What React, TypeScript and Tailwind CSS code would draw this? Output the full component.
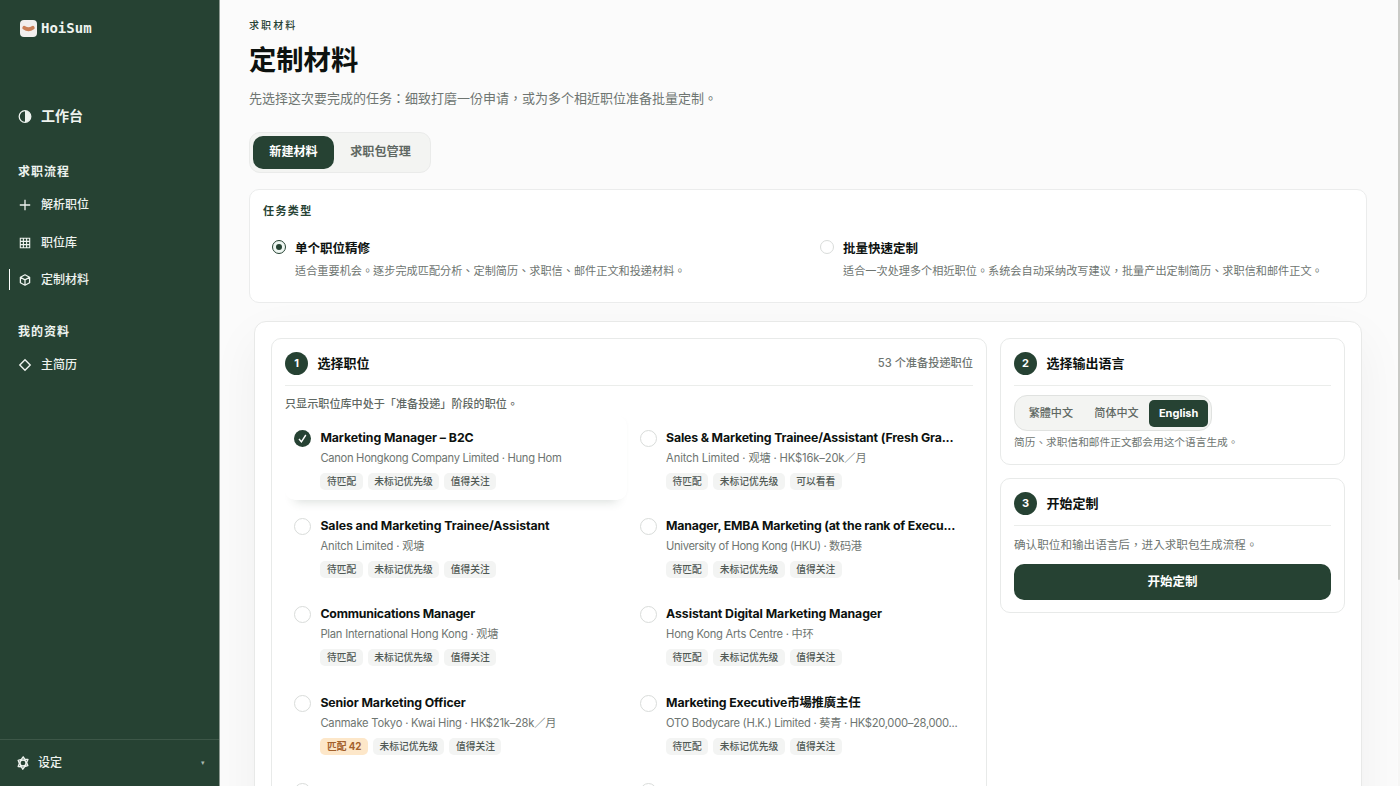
import { useState } from "react";
import type { ReactNode } from "react";

interface Job {
  title: string;
  meta: string;
  tags: string[];
  match?: string;
  titleClass?: string;
  metaClass?: string;
}

const JOBS: Job[] = [
  {
    title: "Marketing Manager – B2C",
    meta: "Canon Hongkong Company Limited · Hung Hom",
    tags: ["待匹配", "未标记优先级", "值得关注"],
    titleClass: "tracking-[-0.06px]",
    metaClass: "tracking-[-0.3px]",
  },
  {
    title: "Sales & Marketing Trainee/Assistant (Fresh Gra...",
    meta: "Anitch Limited · 观塘 · HK$16k–20k／月",
    tags: ["待匹配", "未标记优先级", "可以看看"],
    titleClass: "tracking-[-0.16px]",
    metaClass: "tracking-[-0.14px]",
  },
  {
    title: "Sales and Marketing Trainee/Assistant",
    meta: "Anitch Limited · 观塘",
    tags: ["待匹配", "未标记优先级", "值得关注"],
    titleClass: "tracking-[-0.07px]",
    metaClass: "tracking-[-0.17px]",
  },
  {
    title: "Manager, EMBA Marketing (at the rank of Execu...",
    meta: "University of Hong Kong (HKU) · 数码港",
    tags: ["待匹配", "未标记优先级", "值得关注"],
    titleClass: "tracking-[-0.19px]",
    metaClass: "tracking-[-0.35px]",
  },
  {
    title: "Communications Manager",
    meta: "Plan International Hong Kong · 观塘",
    tags: ["待匹配", "未标记优先级", "值得关注"],
    titleClass: "tracking-[-0.18px]",
    metaClass: "tracking-[-0.23px]",
  },
  {
    title: "Assistant Digital Marketing Manager",
    meta: "Hong Kong Arts Centre · 中环",
    tags: ["待匹配", "未标记优先级", "值得关注"],
    titleClass: "tracking-[-0.08px]",
    metaClass: "tracking-[-0.26px]",
  },
  {
    title: "Senior Marketing Officer",
    meta: "Canmake Tokyo · Kwai Hing · HK$21k–28k／月",
    match: "匹配 42",
    tags: ["未标记优先级", "值得关注"],
    titleClass: "tracking-[-0.1px]",
    metaClass: "tracking-[-0.22px]",
  },
  {
    title: "Marketing Executive市場推廣主任",
    meta: "OTO Bodycare (H.K.) Limited · 葵青 · HK$20,000–28,000...",
    tags: ["待匹配", "未标记优先级", "值得关注"],
    titleClass: "tracking-[-0.1px]",
    metaClass: "tracking-[-0.29px]",
  },
  { title: "", meta: "", tags: [] },
  { title: "", meta: "", tags: [] },
];

const LANGUAGES = ["繁體中文", "简体中文", "English"];

function Logo() {
  return (
    <svg width="17" height="17" viewBox="0 0 17 17">
      <rect width="17" height="17" rx="4" fill="#f3efee" />
      <path d="M4.2 7.8 Q8.5 10.8 12.8 7.8" fill="none" stroke="#cb7f57" strokeWidth="3.8" strokeLinecap="round" />
    </svg>
  );
}

function NavIcon({ children }: { children: ReactNode }) {
  return (
    <svg width="14" height="14" viewBox="0 0 14 14" fill="none" stroke="currentColor" strokeWidth="1.3" className="shrink-0">
      {children}
    </svg>
  );
}

function NavItem({ label, icon, active }: { label: string; icon: ReactNode; active?: boolean }) {
  return (
    <a className="relative flex h-[37.7px] items-center gap-[9px] pl-[18px] text-[12px] font-medium text-[#eef3ef]">
      {active && <span className="absolute left-[8.5px] top-[8px] h-[21px] w-[1.5px] bg-white" />}
      <NavIcon>{icon}</NavIcon>
      {label}
    </a>
  );
}

function Sidebar() {
  return (
    <aside className="flex h-full w-[220px] shrink-0 flex-col border-r border-[#8d9a92] bg-[#264233] text-[#eef3ef]">
      <div className="flex h-[56px] items-center gap-[4px] pl-[20px]">
        <Logo />
        <span className="font-['DejaVu_Sans_Mono',monospace] text-[14px] font-bold">HoiSum</span>
      </div>

      <nav className="mt-[41px] flex flex-col">
        <a className="flex h-[38px] items-center gap-[9px] pl-[18px] text-[14px] font-bold">
          <NavIcon>
            <circle cx="7" cy="7.5" r="5.8" />
            <path d="M7 1.7 A5.8 5.8 0 0 1 7 13.3 Z" fill="currentColor" stroke="none" />
          </NavIcon>
          <span className="-mt-px">工作台</span>
        </a>

        <div className="mt-[28px] flex h-[18px] items-center pl-[18px] text-[12px] font-bold tracking-[1px]">求职流程</div>
        <div className="mt-[5px]">
          <NavItem label="解析职位" icon={<path d="M7 1.8 V12.2 M1.8 7 H12.2" />} />
          <NavItem
            label="职位库"
            icon={<path d="M2.3 2.3 H11.7 V11.7 H2.3 Z M5.4 2.3 V11.7 M8.6 2.3 V11.7 M2.3 5.4 H11.7 M2.3 8.6 H11.7" strokeWidth="1.1" />}
          />
          <NavItem
            label="定制材料"
            active
            icon={<path d="M7 1.8 L11.6 4.3 V9.7 L7 12.2 L2.4 9.7 V4.3 Z M2.4 4.3 L7 6.9 L11.6 4.3 M7 6.9 V12.2" strokeLinejoin="round" />}
          />
        </div>

        <div className="mt-[24px] flex h-[18px] items-center pl-[18px] text-[12px] font-bold tracking-[1px]">我的资料</div>
        <div className="mt-[5px]">
          <NavItem label="主简历" icon={<path d="M7 1.8 L12.2 7 L7 12.2 L1.8 7 Z" strokeWidth="1.4" />} />
        </div>
      </nav>

      <div className="mt-auto flex h-[47px] items-center border-t border-[#3d5748] pl-[16px] pr-[14px] text-[12px] font-medium">
        <svg width="14" height="14" viewBox="0 0 14 14" fill="none" stroke="currentColor">
          <path
            d="M7.2 0.9 L8.7 3.2 L11.9 3.4 L10.6 6.4 L11.8 9.6 L8.7 10.5 L6.8 13.2 L5.3 10.7 L2.2 10.6 L3.4 7.4 L2.2 4.3 L5.4 3.4 Z"
            strokeWidth="1.4"
            strokeLinejoin="round"
          />
          <circle cx="7" cy="7" r="3.1" strokeWidth="1.5" />
        </svg>
        <span className="ml-[8px]">设定</span>
        <span className="ml-auto text-[7px] text-[#a9b8ae]">▾</span>
      </div>
    </aside>
  );
}

interface TaskOptionProps {
  title: string;
  desc: string;
  checked?: boolean;
}

function TaskOption({ title, desc, checked }: TaskOptionProps) {
  return (
    <label className="flex items-start gap-[9px]">
      <span
        className={`mt-[3px] flex size-[14px] shrink-0 items-center justify-center rounded-full border ${
          checked ? "border-[#264233] bg-[#eef6f1]" : "border-[#d9dcda] bg-white"
        }`}
      >
        {checked && <span className="size-[6px] rounded-full bg-[#264233]" />}
      </span>
      <span>
        <span className="mt-[1px] block text-[12.5px] font-bold leading-[21px] text-[#0d120f]">{title}</span>
        <span className="mt-[3px] block whitespace-nowrap text-[11.17px] leading-[19px] text-[#6e7571]">{desc}</span>
      </span>
    </label>
  );
}

function StepHeader({ step, title, extra }: { step: number; title: string; extra?: string }) {
  return (
    <div className="flex h-[34px] items-start border-b border-[#ebedeb]">
      <span className="flex size-[23px] items-center justify-center rounded-full bg-[#264233] text-[11px] font-bold text-white">
        {step}
      </span>
      <h3 className="ml-[9.4px] text-[13px] font-bold leading-[22px] text-[#0d120f]">{title}</h3>
      {extra && <span className="ml-auto text-[11.2px] font-medium leading-[23px] text-[#6e7571]">{extra}</span>}
    </div>
  );
}

function JobCard({ job, selected, onSelect }: { job: Job; selected: boolean; onSelect: () => void }) {
  return (
    <div
      onClick={onSelect}
      className={`flex h-[84.4px] min-w-0 items-start rounded-[10px] pl-[9.4px] pt-[12px] ${
        selected ? "shadow-[0_11px_10px_-10px_rgba(38,66,51,0.2),2px_0_4px_-3px_rgba(38,66,51,0.06)]" : ""
      }`}
    >
      {selected ? (
        <svg width="17" height="17" viewBox="0 0 17 17" className="mt-[2px] shrink-0">
          <circle cx="8.5" cy="8.5" r="8.5" fill="#264233" />
          <path d="M5 9 L7.4 11.8 L11.8 5" fill="none" stroke="#fff" strokeWidth="1.4" />
        </svg>
      ) : (
        <span className="mt-[2px] size-[17px] shrink-0 rounded-full border border-[#d9dcda] bg-white" />
      )}
      <div className="ml-[9px] min-w-0 whitespace-nowrap">
        <div className={`text-[12.3px] font-bold leading-[20px] text-[#0d120f] ${job.titleClass ?? ""}`}>{job.title}</div>
        <div className={`mt-[1px] text-[11.2px] leading-[18px] text-[#6e7571] ${job.metaClass ?? ""}`}>{job.meta}</div>
        <div className="mt-[6px] flex gap-[5px] text-[9.75px] font-medium leading-[17px]">
          {job.match && <span className="rounded-[5px] bg-[#fde7c9] px-[6.5px] font-bold text-[#a3602c]">{job.match}</span>}
          {job.tags.map((tag) => (
            <span key={tag} className="rounded-[5px] bg-[#f3f4f3] px-[6.5px] text-[#4f5853]">
              {tag}
            </span>
          ))}
        </div>
      </div>
    </div>
  );
}

export default function App() {
  const [selected, setSelected] = useState(0);
  const [language, setLanguage] = useState("English");

  return (
    <div className="flex h-[786px] w-[1400px] overflow-hidden bg-[#fbfbfb] font-[Inter,'Noto_Sans_CJK_TC',sans-serif]">
      <Sidebar />

      <main className="min-w-0 flex-1 overflow-hidden pl-[29px] pr-[31px]">
        <p className="mt-[17px] text-[10px] font-medium leading-[16px] tracking-[2.1px] text-[#264233]">求职材料</p>
        <h1 className="mt-[8px] text-[27.3px] font-bold leading-[40px] text-[#0d120f]">定制材料</h1>
        <p className="mt-[6.5px] text-[13px] leading-[20px] text-[#6e7571]">
          先选择这次要完成的任务：细致打磨一份申请，或为多个相近职位准备批量定制。
        </p>

        <div className="mt-[24.5px] flex h-[41px] w-[182px] items-center rounded-[11px] border border-[#eaebea] bg-[#f3f4f2] px-[3px] text-[12.1px] font-bold">
          <button className="h-[33px] w-[81px] rounded-[10px] bg-[#264233] text-white">新建材料</button>
          <button className="h-[33px] w-[93px] text-[#5f6863]">求职包管理</button>
        </div>

        <section className="mt-[16px] h-[114px] rounded-[10px] border border-[#ebecec] bg-white px-[13px] pt-[13px]">
          <h2 className="text-[11px] font-bold leading-[16px] tracking-[1.4px] text-[#264233]">任务类型</h2>
          <div className="mt-[18px] grid grid-cols-[548px_1fr] pl-[9px]">
            <TaskOption
              checked
              title="单个职位精修"
              desc="适合重要机会。逐步完成匹配分析、定制简历、求职信、邮件正文和投递材料。"
            />
            <TaskOption
              title="批量快速定制"
              desc="适合一次处理多个相近职位。系统会自动采纳改写建议，批量产出定制简历、求职信和邮件正文。"
            />
          </div>
        </section>

        <section className="ml-[5px] mr-[5px] mt-[18px] flex h-[900px] items-start gap-[13px] rounded-[12px] border border-[#e8e9e8] bg-white p-[16px] shadow-[0_18px_50px_rgba(0,0,0,0.05)]">
          <div className="h-[860px] w-[716px] shrink-0 rounded-[10px] border border-[#e8eae9] px-[13px] pt-[13px]">
            <StepHeader step={1} title="选择职位" extra="53 个准备投递职位" />
            <p className="mt-[9px] text-[11.1px] font-medium leading-[18px] text-[#5f6863]">
              只显示职位库中处于「准备投递」阶段的职位。
            </p>
            <div className="mt-[2.6px] grid grid-cols-2 gap-x-[3.4px] gap-y-[4px]">
              {JOBS.map((job, i) => (
                <JobCard key={i} job={job} selected={i === selected} onSelect={() => setSelected(i)} />
              ))}
            </div>
          </div>

          <div className="flex flex-1 flex-col gap-[13px]">
            <div className="h-[127px] rounded-[10px] border border-[#e8eae9] px-[13px] pt-[13px]">
              <StepHeader step={2} title="选择输出语言" />
              <div className="mt-[9px] flex h-[36px] w-[198px] items-center rounded-[13px] border border-[#e0e2e0] bg-[#f3f4f2] px-[3px] text-[11.1px] font-medium">
                {LANGUAGES.map((lang) => (
                  <button
                    key={lang}
                    onClick={() => setLanguage(lang)}
                    className={`h-[27px] whitespace-nowrap rounded-[5px] ${lang === "English" ? "w-[59px]" : "w-[66px]"} ${
                      lang === language ? "bg-[#264233] text-[11px] font-bold text-white" : "text-[#5f6863]"
                    }`}
                  >
                    {lang}
                  </button>
                ))}
              </div>
              <p className="mt-[3px] text-[10.7px] leading-[18px] text-[#6e7571]">简历、求职信和邮件正文都会用这个语言生成。</p>
            </div>

            <div className="h-[135px] rounded-[10px] border border-[#e8eae9] px-[13px] pt-[13px]">
              <StepHeader step={3} title="开始定制" />
              <p className="mt-[10px] text-[11.6px] leading-[18px] text-[#6e7571]">确认职位和输出语言后，进入求职包生成流程。</p>
              <button className="mt-[10px] h-[36px] w-full rounded-[10px] bg-[#264233] text-[12.5px] font-bold text-white">
                开始定制
              </button>
            </div>
          </div>
        </section>
      </main>

      <div className="w-[2px] shrink-0 bg-[#f6f6f5]">
        <div className="h-[580px] rounded-b-full bg-[#c9cac6]" />
      </div>
    </div>
  );
}
